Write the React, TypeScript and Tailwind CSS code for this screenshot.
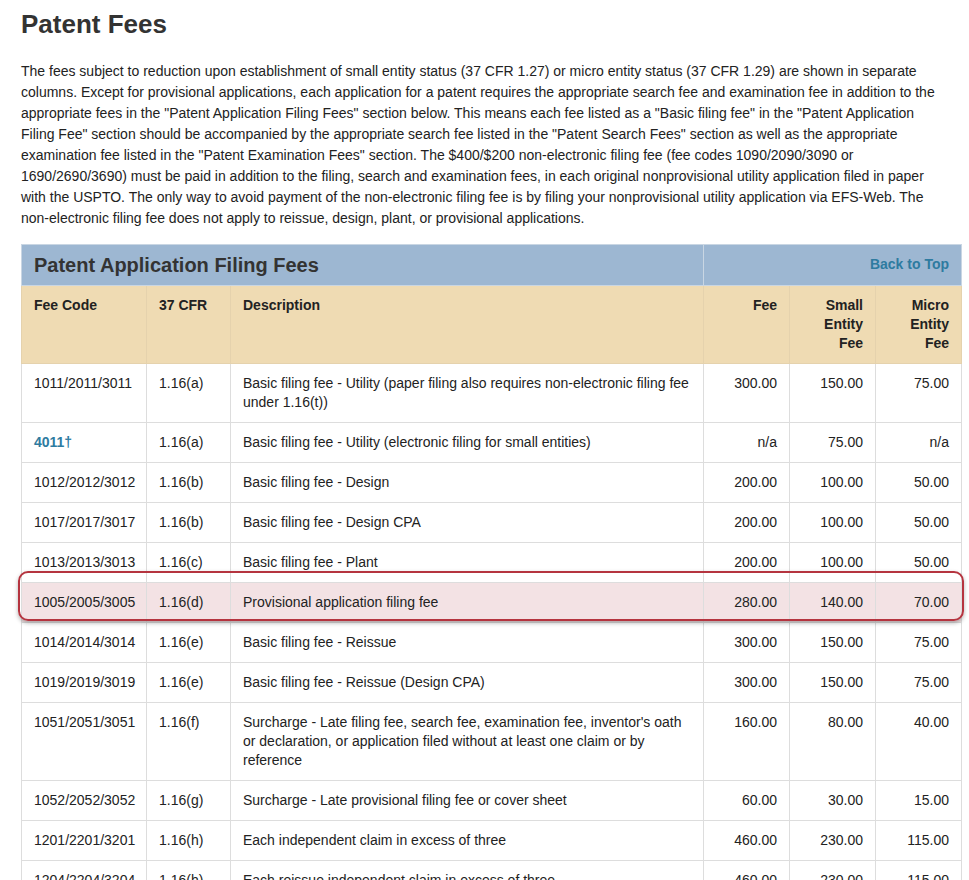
import React from "react";

type Row = [string, string, string, string, string, string, boolean?];
const rows: Row[] = [
  ["1011/2011/3011", "1.16(a)", "Basic filing fee - Utility (paper filing also requires non-electronic filing fee under 1.16(t))", "300.00", "150.00", "75.00"],
  ["4011†", "1.16(a)", "Basic filing fee - Utility (electronic filing for small entities)", "n/a", "75.00", "n/a", true],
  ["1012/2012/3012", "1.16(b)", "Basic filing fee - Design", "200.00", "100.00", "50.00"],
  ["1017/2017/3017", "1.16(b)", "Basic filing fee - Design CPA", "200.00", "100.00", "50.00"],
  ["1013/2013/3013", "1.16(c)", "Basic filing fee - Plant", "200.00", "100.00", "50.00"],
  ["1005/2005/3005", "1.16(d)", "Provisional application filing fee", "280.00", "140.00", "70.00"],
  ["1014/2014/3014", "1.16(e)", "Basic filing fee - Reissue", "300.00", "150.00", "75.00"],
  ["1019/2019/3019", "1.16(e)", "Basic filing fee - Reissue (Design CPA)", "300.00", "150.00", "75.00"],
  ["1051/2051/3051", "1.16(f)", "Surcharge - Late filing fee, search fee, examination fee, inventor's oath or declaration, or application filed without at least one claim or by reference", "160.00", "80.00", "40.00"],
  ["1052/2052/3052", "1.16(g)", "Surcharge - Late provisional filing fee or cover sheet", "60.00", "30.00", "15.00"],
  ["1201/2201/3201", "1.16(h)", "Each independent claim in excess of three", "460.00", "230.00", "115.00"],
  ["1204/2204/3204", "1.16(h)", "Each reissue independent claim in excess of three", "460.00", "230.00", "115.00"],
  ["", "", "", "", "", ""],
];

export default function App() {
  const td = "border border-[#dddddd] px-3 pt-[10px] pb-[10px] align-top leading-[19px]";
  return (
    <div className="bg-white h-[880px] overflow-hidden px-[21px] pt-[9px] text-[#222] font-[family-name:Liberation_Sans,Arial,sans-serif]">
      <h1 className="text-[26px] font-bold text-[#333] leading-[30px]">Patent Fees</h1>
      <p className="mt-[22px] text-[14px] leading-[21px] pr-[4px]">
        The fees subject to reduction upon establishment of small entity status (37 CFR 1.27) or micro entity status (37 CFR 1.29) are shown in separate columns. Except for provisional applications, each application for a patent requires the appropriate search fee and examination fee in addition to the appropriate fees in the "Patent Application Filing Fees" section below. This means each fee listed as a "Basic filing fee" in the "Patent Application Filing Fee" section should be accompanied by the appropriate search fee listed in the "Patent Search Fees" section as well as the appropriate examination fee listed in the "Patent Examination Fees" section. The $400/$200 non-electronic filing fee (fee codes 1090/2090/3090 or 1690/2690/3690) must be paid in addition to the filing, search and examination fees, in each original nonprovisional utility application filed in paper with the USPTO. The only way to avoid payment of the non-electronic filing fee is by filing your nonprovisional utility application via EFS-Web. The non-electronic filing fee does not apply to reissue, design, plant, or provisional applications.
      </p>
      <table className="mt-[15px] w-[940px] table-fixed border-collapse text-[14px]">
        <colgroup>
          <col className="w-[125px]" /><col className="w-[84px]" /><col className="w-[473px]" />
          <col className="w-[86px]" /><col className="w-[86px]" /><col className="w-[86px]" />
        </colgroup>
        <thead>
          <tr className="bg-[#9db7d2] h-[41px]">
            <th colSpan={3} className="border border-[#c9d6e3] text-left px-3 text-[20px] font-bold text-[#333]">Patent Application Filing Fees</th>
            <th colSpan={3} className="border border-[#c9d6e3] text-right px-3 align-top pt-[9px] text-[14px] font-bold text-[#2e7ba0]">Back to Top</th>
          </tr>
          <tr className="bg-[#efdbb3] h-[75px] font-bold">
            <th className={`${td} text-left border-[#e5d2ad]`}>Fee Code</th>
            <th className={`${td} text-left border-[#e5d2ad]`}>37 CFR</th>
            <th className={`${td} text-left border-[#e5d2ad]`}>Description</th>
            <th className={`${td} text-right border-[#e5d2ad]`}>Fee</th>
            <th className={`${td} text-right border-[#e5d2ad]`}>Small Entity Fee</th>
            <th className={`${td} text-right border-[#e5d2ad]`}>Micro Entity Fee</th>
          </tr>
        </thead>
        <tbody>
          {rows.map((r, i) => {
            const hl = i === 5;
            return (
              <tr key={i} className={`${hl ? "bg-[#f3e2e4]" : ""} ${r[0] === "" ? "h-[39px]" : ""}`}>
                <td className={`${td} ${r[6] ? "font-bold text-[#2e7ba0]" : ""} ${hl ? "relative" : ""}`}>
                  {r[0]}
                  {hl && (
                    <div className="absolute left-[-4px] top-[-12px] w-[946px] h-[50px] rounded-[10px] border-[2.5px] border-[#b5343f] shadow-[0_2px_4px_rgba(0,0,0,0.3)] pointer-events-none" />
                  )}
                </td>
                <td className={td}>{r[1]}</td>
                <td className={td}>{r[2]}</td>
                <td className={`${td} text-right`}>{r[3]}</td>
                <td className={`${td} text-right`}>{r[4]}</td>
                <td className={`${td} text-right`}>{r[5]}</td>
              </tr>
            );
          })}
        </tbody>
      </table>
    </div>
  );
}
